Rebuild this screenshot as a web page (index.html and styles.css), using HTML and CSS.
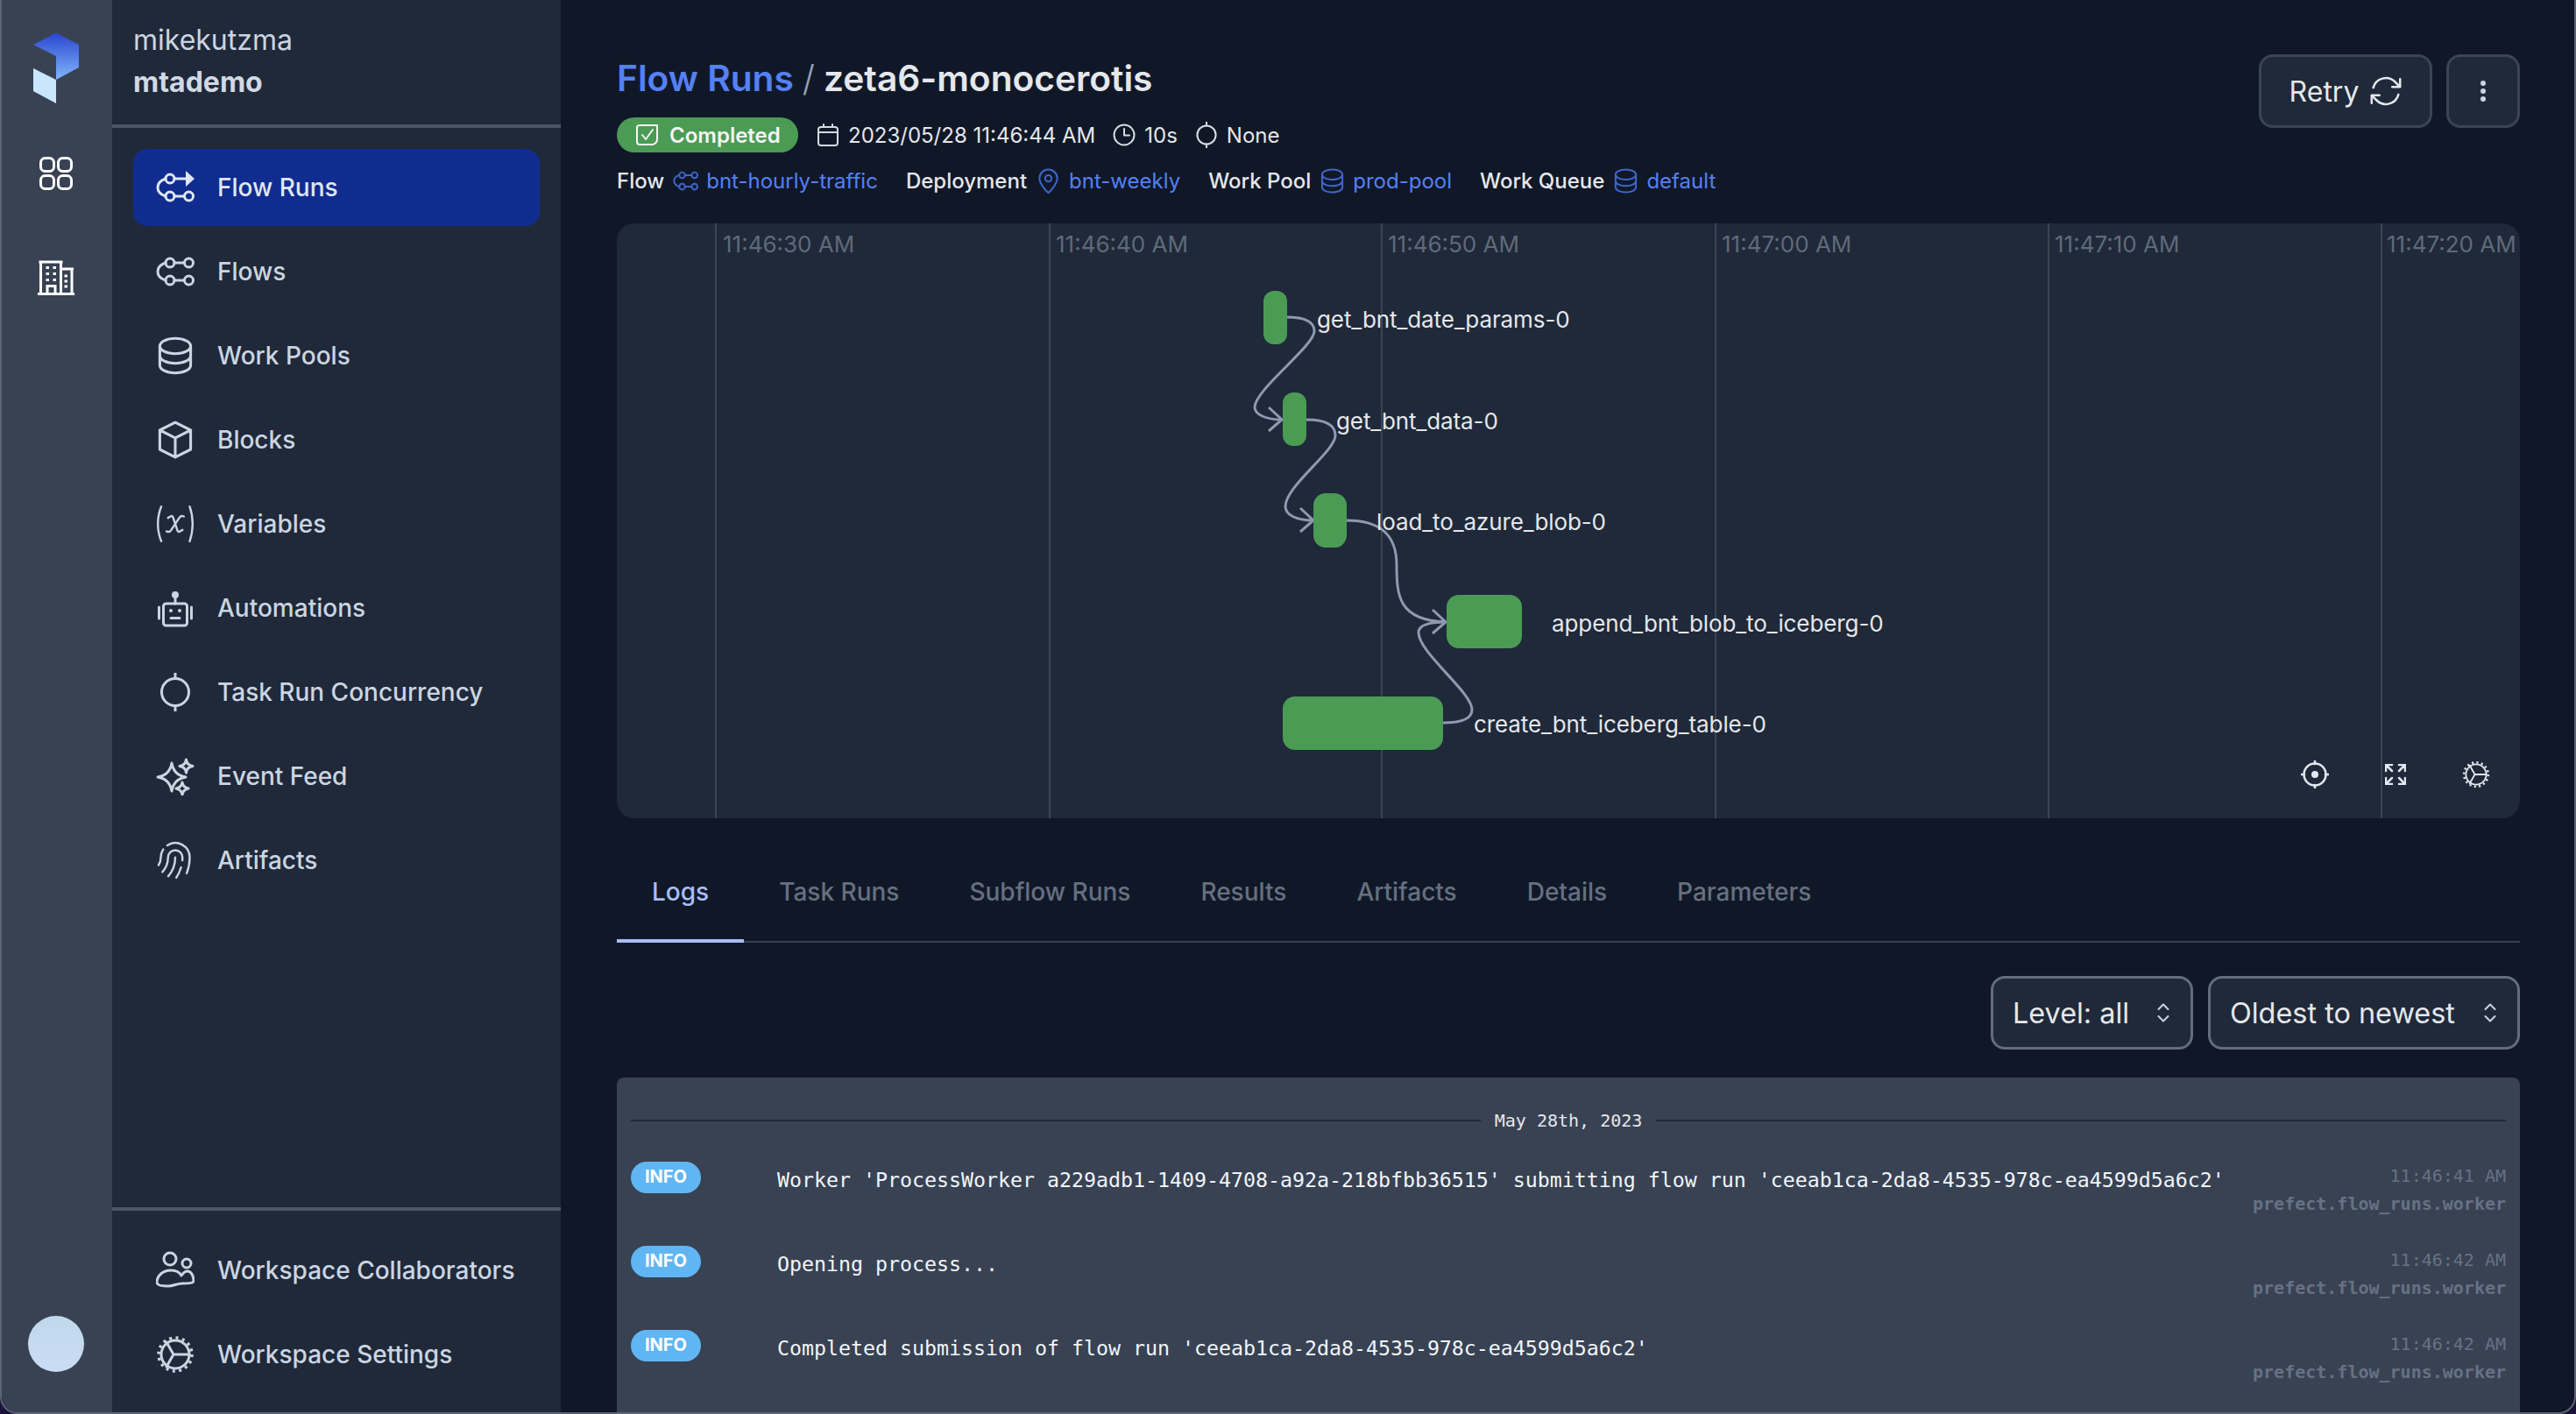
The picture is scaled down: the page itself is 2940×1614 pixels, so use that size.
FILE: index.html
```html
<!DOCTYPE html>
<html lang="en">
<head>
  <meta charset="UTF-8">
  <title>zeta6-monocerotis</title>
  <link rel="stylesheet" href="styles.css">
</head>
<body>
  <!-- icon set, used through <use> below -->
  <svg class="sprite" xmlns="http://www.w3.org/2000/svg">
    <defs>
      <linearGradient id="logo-fade" x1="0" y1="0" x2="0" y2="1">
        <stop offset="0" stop-color="#2a45cf"/>
        <stop offset="1" stop-color="#7fb6fb"/>
      </linearGradient>
    </defs>
    <symbol id="i-flow-runs" viewBox="0 0 44 44">
      <circle cx="16" cy="12" r="5"/><circle cx="16" cy="32" r="5"/><circle cx="37.500" cy="32" r="5"/>
      <path d="M11 12C5 14 2 18 2 22s3 8 9 10M21 32h11.500M21 12h16"/>
      <path class="solid" d="M34 3l10 9-10 9z"/>
    </symbol>
    <symbol id="i-flows" viewBox="0 0 44 44">
      <circle cx="16" cy="12" r="5"/><circle cx="37.500" cy="12" r="5"/><circle cx="16" cy="32" r="5"/><circle cx="37.500" cy="32" r="5"/>
      <path d="M11 12C5 14 2 18 2 22s3 8 9 10M21 32h11.500M21 12h11.500"/>
    </symbol>
    <symbol id="i-db" viewBox="2 2 20 20">
      <path class="thin" d="M4 7v10c0 2.210 3.582 4 8 4s8-1.790 8-4V7M4 7c0 2.210 3.582 4 8 4s8-1.790 8-4M4 7c0-2.210 3.582-4 8-4s8 1.790 8 4m0 5c0 2.210-3.582 4-8 4s-8-1.790-8-4"/>
    </symbol>
    <symbol id="i-cube" viewBox="2 2 20 20">
      <path class="thin" d="M20 7l-8-4-8 4m16 0l-8 4m8-4v10l-8 4m0-10L4 7m8 4v10M4 7v10l8 4"/>
    </symbol>
    <symbol id="i-variable" viewBox="2 2 20 20">
      <path class="hair" d="M4.745 3A23.933 23.933 0 003 12c0 3.183.62 6.220 1.745 9M19.500 3c.967 2.780 1.500 5.817 1.500 9s-.533 6.220-1.500 9M8.250 8.885l1.444-.89a.75.75 0 011.105.402l2.402 7.206a.75.75 0 001.104.401l1.445-.889m-8.250.75l.213.09a1.687 1.687 0 002.062-.617l4.450-6.676a1.688 1.688 0 012.062-.618l.213.09"/>
    </symbol>
    <symbol id="i-robot" viewBox="0 0 44 44">
      <circle class="solid" cx="22" cy="7" r="4"/>
      <path d="M22 10v7M3.500 21v13M40.500 21v13M17 33.500h10"/>
      <rect x="8.500" y="17" width="27" height="25" rx="3"/>
      <circle class="solid" cx="17" cy="25" r="2"/><circle class="solid" cx="27" cy="25" r="2"/>
    </symbol>
    <symbol id="i-concurrency" viewBox="0 0 44 44">
      <circle cx="22" cy="22" r="15.500"/>
      <path d="M22 0v6.500M22 37.500V44"/>
    </symbol>
    <symbol id="i-sparkles" viewBox="0 0 44 44">
      <path d="M18 7C19.500 16 25 21.500 34 23 25 24.500 19.500 30 18 39 16.500 30 11 24.500 2 23 11 21.500 16.500 16 18 7Z"/>
      <path d="M34.500 3C35 7 38 10 42 10.500 38 11 35 14 34.500 18 34 14 31 11 27 10.500 31 10 34 7 34.500 3Z"/>
      <path d="M30 29C30.500 32.500 33 35 37 36 33 37 30.500 39.500 30 43 29.500 39.500 27 37 23 36 27 35 29.500 32.500 30 29Z"/>
    </symbol>
    <symbol id="i-finger" viewBox="2 2 20 20">
      <path class="hair" d="M7.864 4.243A7.500 7.500 0 0119.500 10.500c0 2.920-.556 5.709-1.568 8.268M5.742 6.364A7.465 7.465 0 004.500 10.500a7.464 7.464 0 01-1.150 3.993m1.989 3.559A11.209 11.209 0 008.250 10.500a3.750 3.750 0 117.500 0c0 .527-.021 1.049-.064 1.565M12 10.500a14.940 14.940 0 01-3.600 9.750m6.633-4.596a18.666 18.666 0 01-2.485 5.330"/>
    </symbol>
    <symbol id="i-people" viewBox="0 0 44 44">
      <circle cx="16" cy="9" r="7"/><circle cx="35" cy="14" r="5"/>
      <path d="M1 36C1 28 8 22 17 22c5 0 10 2 12 6 2-3 5-5 7-5 5 0 7 7 7 11 0 3-8 3-13 3-6 0-10 3-16 3-7 0-13-1-13-4Z"/>
    </symbol>
    <symbol id="i-gear" viewBox="0 0 44 44">
      <circle cx="22" cy="22" r="16"/>
      <circle class="teeth" cx="22" cy="22" r="19"/>
      <path d="M20 22h18M20 22l-8 14M20 22l-8-14"/>
    </symbol>
    <symbol id="i-calendar" viewBox="0 0 26 26">
      <rect x="2" y="4" width="22" height="21" rx="3"/>
      <path d="M2 10h22M8 1v3M18 1v3"/>
    </symbol>
    <symbol id="i-clock" viewBox="0 0 26 26">
      <circle cx="13" cy="13" r="11.500"/>
      <path d="M13 6v7.500h6"/>
    </symbol>
    <symbol id="i-pin" viewBox="2 2 20 20">
      <path class="thin" d="M12 21.500s-7-6.500-7-11.500a7 7 0 0114 0c0 5-7 11.500-7 11.500z"/>
      <circle class="thin" cx="12" cy="10" r="2.500"/>
    </symbol>
    <symbol id="i-check" viewBox="0 0 30 26">
      <path d="M6 2h20v16c0 3-2 5-5 6H6c-2 0-3-1-3-3V5c0-2 1-3 3-3Z"/>
      <path d="M9 13l4 5 8-11"/>
    </symbol>
    <symbol id="i-refresh" viewBox="2 2 20 20">
      <path class="thin" d="M16.023 9.348h4.992v-.001M2.985 19.644v-4.992m0 0h4.992m-4.993 0l3.181 3.183a8.250 8.250 0 0013.803-3.700M4.031 9.865a8.250 8.250 0 0113.803-3.700l3.181 3.182m0-4.991v4.990"/>
    </symbol>
    <symbol id="i-target" viewBox="0 0 32 32">
      <circle cx="16" cy="16" r="12.500"/>
      <circle class="solid" cx="16" cy="16" r="4"/>
      <path d="M16 0v4M16 28v4M0 16h4M28 16h4"/>
    </symbol>
    <symbol id="i-expand" viewBox="0 0 24 24">
      <path d="M1 8V1h7M1 1l7 7M16 1h7v7M23 1l-7 7M1 16v7h7M1 23l7-7M16 23h7v-7M23 23l-7-7"/>
    </symbol>
    <symbol id="i-updown" viewBox="0 0 14 22">
      <path d="M1.500 7l5.500-5.500 5.500 5.500M1.500 15l5.500 5.500 5.500-5.500"/>
    </symbol>
  </svg>

  <div class="window">
    <aside class="rail">
      <svg class="rail-logo" viewBox="38 37 52 82">
        <path fill="url(#logo-fade)" d="M64 37.500L90 51v26L64 91V64L38 51z"/>
        <path fill="#c9e6ff" d="M38 78l26 13v27l-26-14z"/>
      </svg>
      <svg class="rail-icon" viewBox="0 0 38 38">
        <rect x="1.500" y="1.500" width="15" height="15" rx="5"/><rect x="21.500" y="1.500" width="15" height="15" rx="5"/>
        <rect x="1.500" y="21.500" width="15" height="15" rx="5"/><rect x="21.500" y="21.500" width="15" height="15" rx="5"/>
      </svg>
      <svg class="rail-icon rail-building" viewBox="0 0 42 40">
        <path d="M0 38.500h42M3.500 38.500V2h23v36.500M26.500 10h12.500v28.500M1.500 2h27M26.500 10h14.500M11 38.500V29.500h9v9"/>
        <path class="dots" d="M11 8.500h.5M19 8.500h.5M11 15.500h.5M19 15.500h.5M11 22.500h.5M19 22.500h.5M32 18h.5M32 24h.5M32 30h.5"/>
      </svg>
      <div class="rail-avatar"></div>
    </aside>

    <nav class="sidebar">
      <div class="account">
        <div class="account-user">mikekutzma</div>
        <div class="account-name">mtademo</div>
      </div>
      <div class="nav-list">
        <a class="nav-item active"><svg class="icon"><use href="#i-flow-runs"/></svg>Flow Runs</a>
        <a class="nav-item"><svg class="icon"><use href="#i-flows"/></svg>Flows</a>
        <a class="nav-item"><svg class="icon"><use href="#i-db"/></svg>Work Pools</a>
        <a class="nav-item"><svg class="icon"><use href="#i-cube"/></svg>Blocks</a>
        <a class="nav-item"><svg class="icon"><use href="#i-variable"/></svg>Variables</a>
        <a class="nav-item"><svg class="icon"><use href="#i-robot"/></svg>Automations</a>
        <a class="nav-item"><svg class="icon"><use href="#i-concurrency"/></svg>Task Run Concurrency</a>
        <a class="nav-item"><svg class="icon"><use href="#i-sparkles"/></svg>Event Feed</a>
        <a class="nav-item"><svg class="icon"><use href="#i-finger"/></svg>Artifacts</a>
      </div>
      <div class="nav-list nav-bottom">
        <a class="nav-item"><svg class="icon"><use href="#i-people"/></svg>Workspace Collaborators</a>
        <a class="nav-item"><svg class="icon"><use href="#i-gear"/></svg>Workspace Settings</a>
      </div>
    </nav>

    <main class="content">
      <header class="run-header">
        <div class="run-info">
          <h1 class="run-title"><span class="crumb">Flow Runs</span><span class="slash">/</span>zeta6-monocerotis</h1>
          <div class="run-meta">
            <span class="badge"><svg class="badge-icon"><use href="#i-check"/></svg>Completed</span>
            <span class="meta-item"><svg class="meta-icon"><use href="#i-calendar"/></svg>2023/05/28 11:46:44 AM</span>
            <span class="meta-item"><svg class="meta-icon"><use href="#i-clock"/></svg>10s</span>
            <span class="meta-item"><svg class="meta-icon meta-icon-tall"><use href="#i-concurrency"/></svg>None</span>
          </div>
          <div class="run-links">
            <span class="link-group">Flow <svg class="link-icon"><use href="#i-flows"/></svg><a>bnt-hourly-traffic</a></span>
            <span class="link-group">Deployment <svg class="link-icon"><use href="#i-pin"/></svg><a>bnt-weekly</a></span>
            <span class="link-group">Work Pool <svg class="link-icon"><use href="#i-db"/></svg><a>prod-pool</a></span>
            <span class="link-group">Work Queue <svg class="link-icon"><use href="#i-db"/></svg><a>default</a></span>
          </div>
        </div>
        <div class="run-actions">
          <button class="btn btn-retry">Retry<svg class="btn-icon"><use href="#i-refresh"/></svg></button>
          <button class="btn btn-more"><span class="kebab"></span></button>
        </div>
      </header>

      <section class="graph">
        <!-- timeline canvas, coordinates are panel pixels -->
        <svg class="graph-canvas" viewBox="704 255 2172 679">
          <g class="grid">
            <path d="M817 255v679M1198 255v679M1577 255v679M1958 255v679M2338 255v679M2718 255v679"/>
          </g>
          <g class="ticks">
            <text x="825" y="288">11:46:30 AM</text>
            <text x="1205" y="288">11:46:40 AM</text>
            <text x="1584" y="288">11:46:50 AM</text>
            <text x="1965" y="288">11:47:00 AM</text>
            <text x="2345" y="288">11:47:10 AM</text>
            <text x="2724" y="288">11:47:20 AM</text>
          </g>
          <g class="edges">
            <path d="M1469 362C1490 362 1500 368 1500 378 1500 395 1432 445 1432 465 1432 473 1445 479 1463 479M1448 465l15 14-15 13"/>
            <path d="M1491 479C1512 479 1524 484 1524 497 1524 515 1467 555 1467 578 1467 588 1480 594 1499 594M1484 580l15 14-15 13"/>
            <path d="M1537 594C1575 594 1594 610 1594 645 1594 680 1596 708 1650 710M1635 696l15 14-15 13"/>
            <path d="M1647 825C1670 825 1680 820 1680 810 1680 790 1619 745 1619 722 1619 712 1635 710 1650 710"/>
          </g>
          <g class="nodes">
            <rect x="1442" y="332" width="27" height="61" rx="12"/>
            <rect x="1464" y="448" width="27" height="61" rx="12"/>
            <rect x="1499" y="563" width="38" height="62" rx="14"/>
            <rect x="1651" y="679" width="86" height="61" rx="14"/>
            <rect x="1464" y="795" width="183" height="61" rx="14"/>
          </g>
          <g class="node-labels">
            <text x="1503" y="374">get_bnt_date_params-0</text>
            <text x="1525" y="490">get_bnt_data-0</text>
            <text x="1571" y="605">load_to_azure_blob-0</text>
            <text x="1771" y="721">append_bnt_blob_to_iceberg-0</text>
            <text x="1682" y="836">create_bnt_iceberg_table-0</text>
          </g>
        </svg>
        <div class="graph-controls">
          <svg class="ctl ctl-target"><use href="#i-target"/></svg>
          <svg class="ctl ctl-expand"><use href="#i-expand"/></svg>
          <svg class="ctl ctl-gear"><use href="#i-gear"/></svg>
        </div>
      </section>

      <div class="tabs">
        <a class="tab active">Logs</a>
        <a class="tab">Task Runs</a>
        <a class="tab">Subflow Runs</a>
        <a class="tab">Results</a>
        <a class="tab">Artifacts</a>
        <a class="tab">Details</a>
        <a class="tab">Parameters</a>
      </div>

      <div class="log-filters">
        <div class="select select-level">Level: all<svg class="select-arrow"><use href="#i-updown"/></svg></div>
        <div class="select select-order">Oldest to newest<svg class="select-arrow"><use href="#i-updown"/></svg></div>
      </div>

      <section class="logs">
        <div class="log-date"><span>May 28th, 2023</span></div>
        <div class="log-row">
          <span class="log-level">INFO</span>
          <span class="log-msg">Worker 'ProcessWorker a229adb1-1409-4708-a92a-218bfbb36515' submitting flow run 'ceeab1ca-2da8-4535-978c-ea4599d5a6c2'</span>
          <div class="log-side"><div class="log-time">11:46:41 AM</div><div class="log-name">prefect.flow_runs.worker</div></div>
        </div>
        <div class="log-row">
          <span class="log-level">INFO</span>
          <span class="log-msg">Opening process...</span>
          <div class="log-side"><div class="log-time">11:46:42 AM</div><div class="log-name">prefect.flow_runs.worker</div></div>
        </div>
        <div class="log-row">
          <span class="log-level">INFO</span>
          <span class="log-msg">Completed submission of flow run 'ceeab1ca-2da8-4535-978c-ea4599d5a6c2'</span>
          <div class="log-side"><div class="log-time">11:46:42 AM</div><div class="log-name">prefect.flow_runs.worker</div></div>
        </div>
      </section>
    </main>
  </div>
</body>
</html>
```

FILE: styles.css
```css
* {
  box-sizing: border-box;
}

html, body {
  margin: 0;
  height: 100%;
  background: #1a1238;
}

body {
  font-family: Inter, "Noto Sans", sans-serif;
  overflow: hidden;
}

.sprite {
  position: absolute;
  width: 0;
  height: 0;
}

.window {
  display: flex;
  height: 1614px;
  border: 2px solid #5b6576;
  border-top: none;
  border-radius: 0 0 20px 20px;
  overflow: hidden;
  background: #101828;
}

/* left rail */
.rail {
  width: 126px;
  flex: none;
  background: #384253;
  display: flex;
  flex-direction: column;
  align-items: center;
  padding: 37px 2px 0 0;
}

.rail-logo {
  width: 52px;
  height: 82px;
  display: block;
}

.rail-icon {
  fill: none;
  stroke: #fff;
  stroke-width: 3;
  width: 38px;
  height: 38px;
  margin-top: 60px;
}

.rail-building {
  width: 42px;
  height: 40px;
  margin-top: 80px;
}

.rail-building .dots {
  stroke-width: 3;
  stroke-linecap: square;
}

.rail-avatar {
  width: 64px;
  height: 64px;
  border-radius: 50%;
  margin-top: auto;
  margin-bottom: 46px;
  background: linear-gradient(180deg, #c0d8eb 0%, #cadcf3 100%);
}

/* sidebar */
.sidebar {
  width: 512px;
  flex: none;
  background: #1f2939;
  display: flex;
  flex-direction: column;
  color: #cbd5e1;
}

.account {
  height: 146px;
  padding: 26px 24px 0;
  border-bottom: 4px solid #4a5565;
}

.account-user {
  font-size: 32px;
  line-height: 40px;
  color: #cbd5e1;
}

.account-name {
  font-size: 32px;
  line-height: 40px;
  margin-top: 8px;
  font-weight: 700;
  color: #d1d9e4;
}

.nav-list {
  padding: 24px 24px 0;
  display: flex;
  flex-direction: column;
  gap: 8px;
}

.nav-bottom {
  margin-top: auto;
  height: 234px;
  border-top: 4px solid #4a5565;
  padding-top: 24px;
}

.nav-item {
  height: 88px;
  display: flex;
  align-items: center;
  gap: 26px;
  padding-left: 26px;
  border-radius: 16px;
  font-size: 28px;
  font-weight: 500;
}

.nav-item.active {
  background: #112c8f;
  color: #dfe7f1;
}

.icon {
  width: 44px;
  height: 44px;
  flex: none;
}

.icon, .meta-icon, .link-icon, .badge-icon, .btn-icon, .ctl, .select-arrow {
  fill: none;
  stroke: currentColor;
  stroke-width: 3;
  stroke-linecap: round;
  stroke-linejoin: round;
}

.thin {
  stroke-width: 1.400;
}

.hair {
  stroke-width: 1.100;
}

.solid {
  fill: currentColor;
  stroke: none;
}

.teeth {
  stroke-width: 3.500;
  stroke-dasharray: 3 4.460;
  stroke-linecap: butt;
}

/* main column */
.content {
  flex: 1;
  min-width: 0;
  display: flex;
  flex-direction: column;
  padding: 0 62px 0 64px;
}

.run-header {
  display: flex;
  justify-content: space-between;
  align-items: flex-start;
  padding-top: 60px;
}

.run-title {
  margin: 0;
  font-size: 40.700px;
  line-height: 60px;
  font-weight: 600;
  color: #e5e7eb;
}

.crumb {
  color: #5580f6;
}

.slash {
  color: #94a3b8;
  font-weight: 300;
  margin: 0 10px;
}

.run-meta {
  display: flex;
  align-items: center;
  height: 40px;
  margin-top: 14px;
  font-size: 24px;
  color: #e5e7eb;
}

.badge {
  display: flex;
  align-items: center;
  height: 40px;
  width: 207px;
  padding-left: 20px;
  gap: 10px;
  border-radius: 20px;
  background: #4b9b55;
  color: #f3f7f3;
  font-weight: 600;
  margin-right: 21px;
}

.badge-icon {
  width: 30px;
  height: 26px;
  stroke-width: 2;
}

.meta-item {
  display: flex;
  align-items: center;
  gap: 10px;
  margin-right: 20px;
}

.meta-icon {
  width: 26px;
  height: 26px;
  stroke-width: 2;
  color: #d6dbe3;
}

.meta-icon-tall {
  width: 30px;
  height: 30px;
  margin: 0 -2px;
  stroke-width: 3;
}

.run-links {
  display: flex;
  align-items: center;
  height: 40px;
  margin-top: 12px;
  gap: 32px;
  font-size: 24px;
  font-weight: 500;
  color: #e5e7eb;
}

.link-group {
  display: flex;
  align-items: center;
  gap: 9.500px;
}

.link-group a {
  font-weight: 400;
  color: #5580f6;
}

.link-icon {
  width: 29px;
  height: 29px;
  color: #3f66c9;
}

.run-actions {
  display: flex;
  gap: 16px;
  margin-top: 2px;
}

.btn {
  height: 84px;
  display: flex;
  align-items: center;
  justify-content: center;
  background: #1f2939;
  border: 3px solid #3a4555;
  border-radius: 16px;
  color: #e5e7eb;
  font-family: inherit;
  font-size: 32px;
}

.btn-retry {
  width: 198px;
  gap: 13px;
}

.btn-icon {
  width: 36px;
  height: 36px;
}

.btn-more {
  width: 84px;
}

.kebab {
  width: 6px;
  height: 6px;
  border-radius: 50%;
  background: #cbd5e1;
  box-shadow: 0 -9px 0 #cbd5e1, 0 9px 0 #cbd5e1;
}

/* flow graph */
.graph {
  position: relative;
  height: 679px;
  margin-top: 29px;
  border-radius: 20px;
  background: #1f2939;
  overflow: hidden;
}

.graph-canvas {
  display: block;
  width: 100%;
  height: 100%;
}

.grid path {
  fill: none;
  stroke: #3a4555;
  stroke-width: 2;
}

.ticks text {
  font-size: 26px;
  fill: #5f6a7a;
}

.edges path {
  fill: none;
  stroke: #8e9ab0;
  stroke-width: 3;
}

.nodes rect {
  fill: #4b9b55;
}

.node-labels text {
  font-size: 26px;
  fill: #e5e7eb;
  letter-spacing: -0.1px;
}

.graph-controls {
  position: absolute;
  right: 4px;
  bottom: 4px;
  display: flex;
  color: #e2e8f0;
}

.ctl {
  width: 32px;
  height: 32px;
  margin: 30px;
  stroke-width: 2.500;
}

.ctl-expand {
  width: 24px;
  height: 24px;
  margin: 34px;
}

/* tabs */
.tabs {
  display: flex;
  margin-top: 32px;
  border-bottom: 2px solid #374151;
}

.tab {
  padding: 34px 40px;
  border-bottom: 4px solid transparent;
  margin-bottom: -2px;
  height: 110px;
  font-size: 28px;
  line-height: 36px;
  font-weight: 500;
  color: #667080;
}

.tab.active {
  color: #a8bdf8;
  border-bottom-color: #a8bdf8;
}

/* log filters */
.log-filters {
  display: flex;
  justify-content: flex-end;
  gap: 17px;
  margin-top: 38px;
}

.select {
  height: 84px;
  display: flex;
  align-items: center;
  justify-content: space-between;
  padding: 0 24px 0 22px;
  background: #1f2939;
  border: 3px solid #626d80;
  border-radius: 16px;
  font-size: 32.400px;
  color: #e5e7eb;
}

.select-level {
  width: 231px;
}

.select-order {
  width: 356px;
}

.select-arrow {
  width: 14px;
  height: 22px;
  stroke-width: 2;
  color: #cbd5e1;
}

/* logs */
.logs {
  flex: 1;
  margin-top: 32px;
  padding: 9px 16px 0;
  border-radius: 8px 8px 0 0;
  background: #384253;
  font-family: "DejaVu Sans Mono", "Liberation Mono", monospace;
  min-height: 0;
}

.log-date {
  display: flex;
  align-items: center;
  gap: 16px;
  height: 80px;
  font-size: 20px;
  color: #e5e7eb;
  margin-bottom: 7px;
}

.log-date::before, .log-date::after {
  content: "";
  flex: 1;
  height: 2px;
  background: #1f2939;
}

.log-row {
  display: flex;
  height: 96px;
  align-items: flex-start;
}

.log-level {
  width: 80px;
  height: 36px;
  flex: none;
  border-radius: 18px;
  background: #60b6f3;
  color: #fff;
  font-family: Inter, sans-serif;
  font-size: 20px;
  font-weight: 700;
  line-height: 34px;
  text-align: center;
}

.log-msg {
  flex: 1;
  margin-left: 87px;
  margin-top: 5px;
  font-size: 23.250px;
  line-height: 32px;
  color: #f1f5f9;
  white-space: nowrap;
}

.log-side {
  text-align: right;
  font-size: 20px;
  line-height: 32px;
  color: #667285;
}

.log-name {
  font-weight: 700;
}
```
